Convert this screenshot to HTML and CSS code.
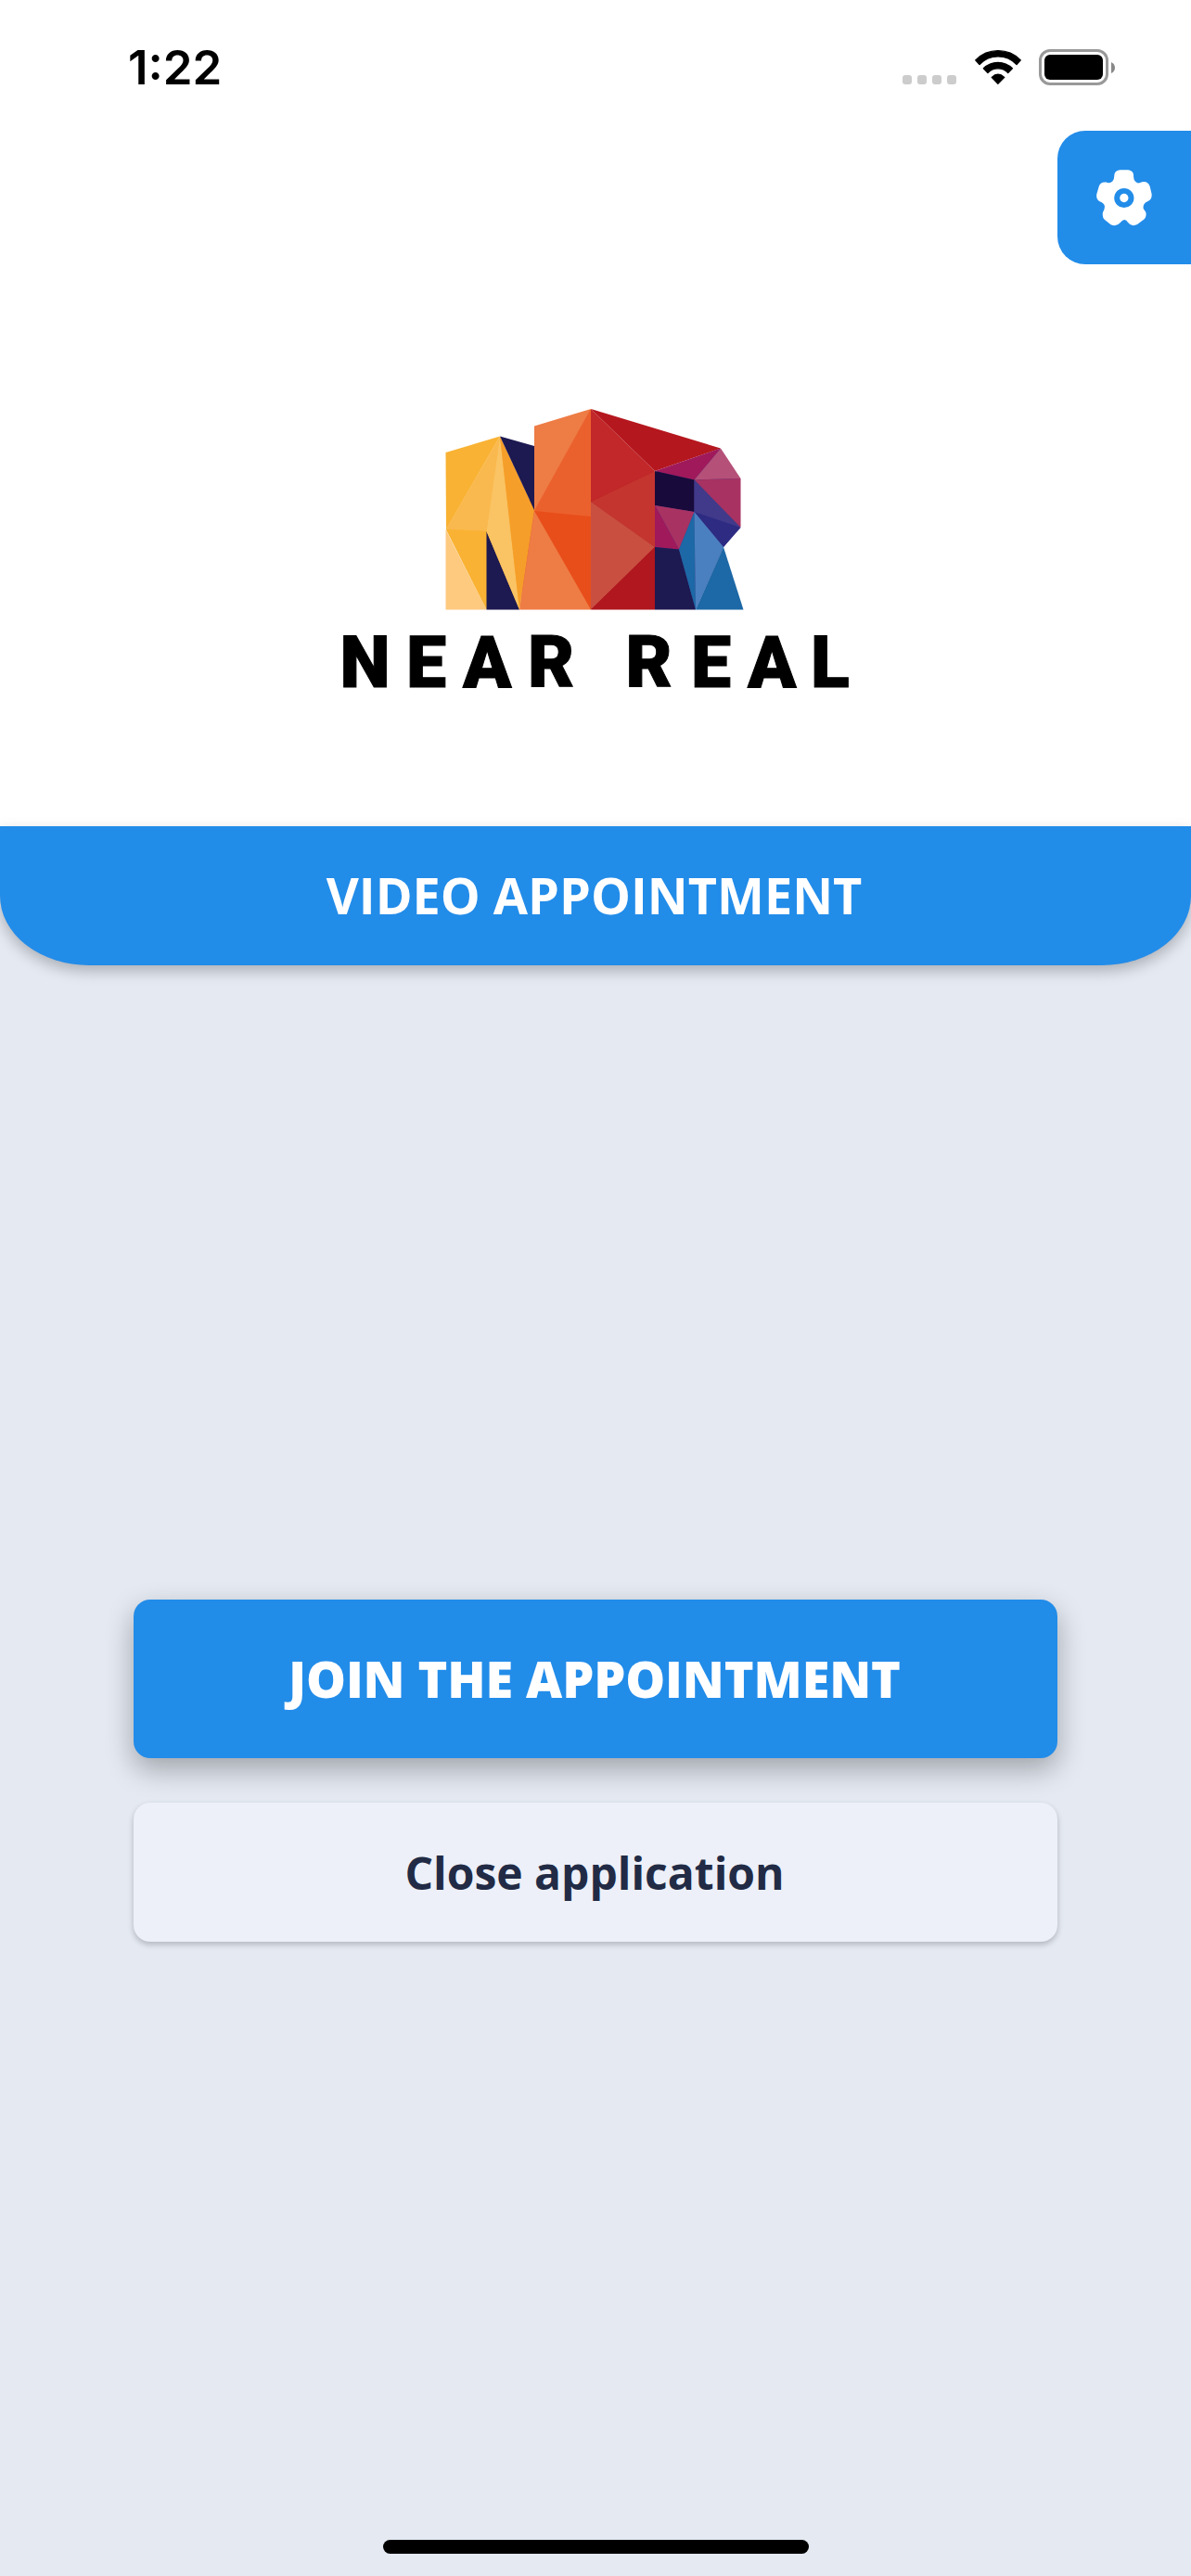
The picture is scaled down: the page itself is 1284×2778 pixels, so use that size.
FILE: index.html
```html
<!DOCTYPE html>
<html lang="en">
<head>
  <meta charset="UTF-8">
  <meta name="viewport" content="width=device-width, initial-scale=1.0">
  <title>Near Real</title>
  <link rel="stylesheet" href="styles.css">
</head>
<body>
  <div class="screen">
    <header class="top">
      <div class="status-bar">
        <span class="time">1:22</span>
        <div class="status-icons">
          <div class="signal"><i></i><i></i><i></i><i></i></div>
          <svg class="wifi" viewBox="331 101 151 112">
            <path d="M333 134A103 103 0 0 1 480 134L467 148A83 83 0 0 0 346 148Z"/>
            <path d="M359 161A66 66 0 0 1 453 161L439 175A46 46 0 0 0 373 175Z"/>
            <path d="M386 190Q406 171 427 190L406 211Z"/>
          </svg>
          <div class="battery"><div class="battery-level"></div></div>
          <svg class="battery-tip" viewBox="0 0 4 12"><path d="M0 0Q4 2 4 6T0 12Z"/></svg>
        </div>
      </div>

      <button class="settings" aria-label="Settings">
        <svg viewBox="186 188 181 182">
          <path d="M262 188H290Q307 190 307 207Q306 226 322 231Q329 229 334 227Q353 223 360 241L366 267Q367 285 351 291Q336 298 339 314L347 326Q350 343 339 350L319 365Q300 374 289 359Q278 341 264 359Q252 374 233 366L213 350Q204 342 207 326Q218 306 209 298Q204 292 197 290Q184 283 187 266L195 239Q201 225 218 228Q230 233 239 224Q244 219 244 208Q244 190 262 188Z"/>
          <circle class="gear-hole" cx="276" cy="279" r="32"/>
          <circle cx="276" cy="279" r="14"/>
        </svg>
      </button>

      <svg class="logo" viewBox="366 440 552 304">
        <!-- base colours under the facets, so no gaps show between them -->
        <polygon fill="#f9b233" points="481,571 539,471 576,550 560,657 525,657"/>
        <polygon fill="#eb612d" points="576,482 577,460 637,442 637,657 561,657"/>
        <polygon fill="#b0171e" points="636,442 706,509 707,657 636,657"/>
        <polygon fill="#413a8a" points="706,509 776,484 798,517 798,568 780,590 750,657 706,657"/>
        <!-- N -->
        <polygon fill="#f9b233" points="480.5,488 539,470.5 481,571"/>
        <polygon fill="#fab94e" points="539,470.5 524.5,573 481,571"/>
        <polygon fill="#fdca80" points="480.5,571 524.5,657.5 480.5,657.5"/>
        <polygon fill="#f9b233" points="481,571 524.5,573 524.5,657.5"/>
        <polygon fill="#1d1951" points="524.5,573 560,657.5 524.5,657.5"/>
        <polygon fill="#fac364" points="539,470.5 560,657.5 524.5,573"/>
        <polygon fill="#f59e29" points="539,470.5 576,550 560,657.5"/>
        <polygon fill="#1d1951" points="539,470.5 576,481 576,550"/>
        <polygon fill="#ee7c45" points="576,459.5 637,441 576,551"/>
        <polygon fill="#eb612d" points="637,441 637,557 576,551"/>
        <polygon fill="#e84e1a" points="576,551 637,557 637,657.5"/>
        <polygon fill="#ee7c45" points="576,551 637,657.5 560,657.5"/>
        <!-- R -->
        <polygon fill="#c22829" points="637,441 706,508 637,541"/>
        <polygon fill="#b5171e" points="637,441 777,483.5 706,508"/>
        <polygon fill="#c5352f" points="706,508 706,590 637,541"/>
        <polygon fill="#c94f41" points="637,541 706,590 637,657.5"/>
        <polygon fill="#b0171e" points="706,590 706,657.5 637,657.5"/>
        <polygon fill="#a0195b" points="706,508 777,483.5 748.5,517.5"/>
        <polygon fill="#b55078" points="777,483.5 798.5,516 748.5,517.5"/>
        <polygon fill="#a83262" points="748.5,517.5 798.5,516 798.5,569"/>
        <polygon fill="#180a3a" points="706,508 748.5,517.5 748.5,552 706,545"/>
        <polygon fill="#413a8a" points="748.5,517.5 798.5,569 748.5,552"/>
        <polygon fill="#2d2b82" points="748.5,552 798.5,569 780,590"/>
        <polygon fill="#a83262" points="706,545 748.5,552 732,592.5"/>
        <polygon fill="#a0195b" points="706,545 732,592.5 706,590"/>
        <polygon fill="#1d1951" points="706,590 732,592.5 750,657.5 706,657.5"/>
        <polygon fill="#1d68a6" points="748.5,552 750,657.5 732,592.5"/>
        <polygon fill="#4b80c0" points="748.5,552 780,590 750,657.5"/>
        <polygon fill="#1d68a6" points="780,590 801.5,657.5 750,657.5"/>
        <text class="logo-text" y="740.5" x="366.5 438 499 569 616 674.5 745 806 874">NEAR REAL</text>
      </svg>
    </header>

    <main class="content">
      <h1 class="title">VIDEO APPOINTMENT</h1>
      <div class="actions">
        <button class="btn join">JOIN THE APPOINTMENT</button>
        <button class="btn close">Close application</button>
      </div>
    </main>

    <div class="home-indicator"></div>
  </div>
</body>
</html>
```

FILE: styles.css
```css
* {
  box-sizing: border-box;
}

body {
  margin: 0;
  font-family: "Open Sans", sans-serif;
  background-color: #e4e9f2;
}

.screen {
  display: flex;
  flex-direction: column;
  height: 2778px;
}

.top {
  display: flex;
  flex-direction: column;
  align-items: center;
  height: 891px;
  background-color: #fff;
}

/* status bar */
.status-bar {
  display: flex;
  justify-content: space-between;
  align-items: center;
  width: 100%;
  height: 141px;
  padding: 4px 82px 0 138px;
}

.time {
  font-family: Inter, sans-serif;
  font-size: 51px;
  font-weight: 600;
  line-height: 60px;
}

.status-icons {
  display: flex;
  align-items: center;
}

.signal {
  display: flex;
  gap: 6px;
  padding-top: 26px;
  margin-right: 20px;
}

.signal i {
  width: 10px;
  height: 10px;
  border-radius: 3px;
  background-color: #ccc;
}

.wifi {
  width: 50px;
  height: 37px;
  margin-right: 19px;
  stroke: #000;
  stroke-width: 4;
  stroke-linejoin: round;
}

.battery {
  width: 75px;
  height: 39px;
  padding: 3px;
  border: 3px solid #999;
  border-radius: 12px;
}

.battery-level {
  height: 100%;
  border-radius: 6px;
  background-color: #000;
}

.battery-tip {
  width: 4px;
  height: 12px;
  margin-left: 3px;
  fill: #888;
}

.settings {
  display: flex;
  align-items: center;
  align-self: flex-end;
  width: 144px;
  height: 144px;
  padding: 0 0 0 42px;
  border: none;
  border-radius: 30px 0 0 30px;
  background-color: #228ce9;
}

.settings svg {
  width: 60px;
  height: 61px;
  fill: #fff;
}

.settings .gear-hole {
  fill: #228ce9;
}

.logo {
  width: 552px;
  height: 304px;
  margin-top: 155px;
  overflow: visible;
}

.logo-text {
  font-family: Roboto, sans-serif;
  font-size: 77px;
  font-weight: 900;
  stroke: #000;
  stroke-width: 1;
}

.content {
  flex: 1;
}

.title {
  height: 150px;
  margin: 0;
  padding-right: 3px;
  border-radius: 0 0 96px 96px / 0 0 75px 75px;
  background-color: #228ce9;
  box-shadow: 0 6px 15px rgba(0, 0, 0, 0.25);
  color: #fff;
  font-size: 54px;
  font-weight: 700;
  line-height: 149px;
  text-align: center;
}

.actions {
  display: flex;
  flex-direction: column;
  gap: 48px;
  padding: 684px 144px 0;
}

.btn {
  padding: 0 2px 0 0;
  border: none;
  border-radius: 18px;
  font-family: inherit;
}

.join {
  height: 171px;
  padding-bottom: 2px;
  background-color: #228ce9;
  box-shadow: 0 12px 30px rgba(0, 0, 0, 0.3);
  color: #fff;
  font-size: 54px;
  font-weight: 800;
  letter-spacing: -0.1px;
}

.close {
  height: 150px;
  background-color: #edf0f8;
  box-shadow: 0 3px 6px rgba(0, 0, 0, 0.22);
  color: #222b45;
  font-size: 48px;
  font-weight: 700;
}

.home-indicator {
  width: 459px;
  height: 15px;
  margin: 0 auto 24px;
  border-radius: 8px;
  background-color: #000;
}
```
